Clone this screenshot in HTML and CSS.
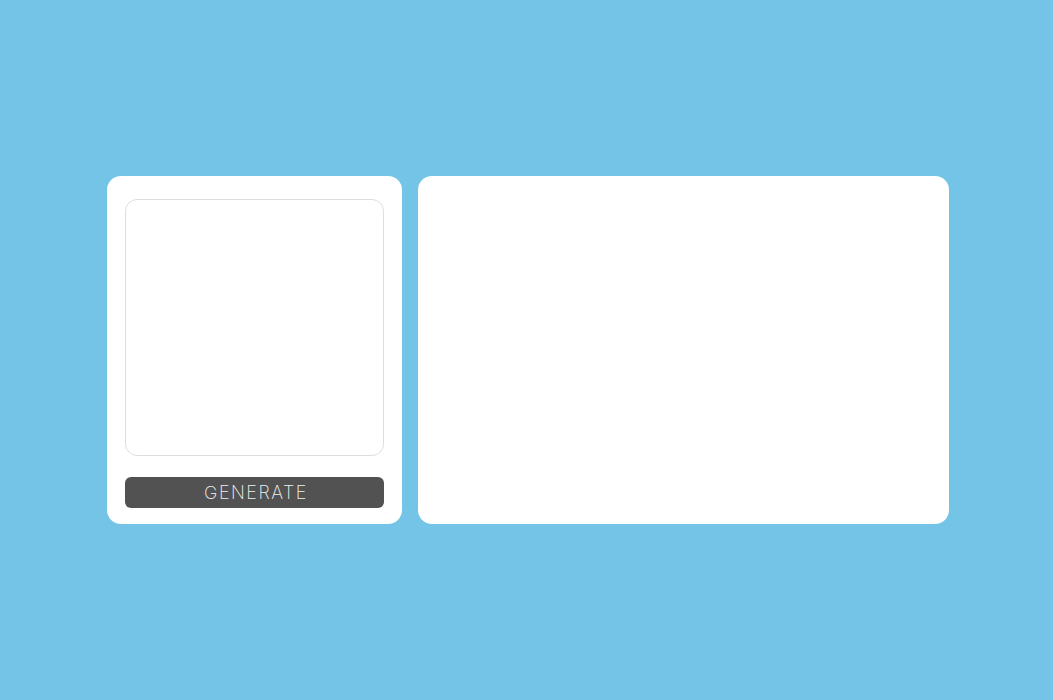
FILE: index.html
```html
<!DOCTYPE html>
<html>
<head>
<meta charset="utf-8">
<link rel="stylesheet" href="styles.css">
</head>
<body>
<main class="app">
  <section class="card input-card">
    <textarea class="prompt"></textarea>
    <button class="generate">GENERATE</button>
  </section>
  <section class="card output-card"></section>
</main>
</body>
</html>
```
FILE: styles.css
```css
html, body {
  margin: 0;
  height: 100%;
}
body {
  background: #73c4e6;
  font-family: Inter, "Noto Sans", sans-serif;
}
.app {
  height: 700px;
  display: flex;
  align-items: center;
  justify-content: center;
  gap: 16px;
  padding-left: 2px;
}
.card {
  background: #fff;
  border-radius: 14px;
  height: 348px;
  box-sizing: border-box;
}
.input-card {
  width: 295px;
  padding: 23px 18px 16px;
  display: flex;
  flex-direction: column;
}
.prompt {
  height: 257px;
  box-sizing: border-box;
  border: 1px solid #dedede;
  border-radius: 12px;
  resize: none;
  outline: none;
  margin: 0;
}
.generate {
  margin-top: 21px;
  height: 31px;
  border: none;
  border-radius: 6px;
  background: #525252;
  color: #f0f0f0;
  font-family: Inter, sans-serif;
  font-weight: 200;
  font-size: 18px;
  letter-spacing: 1.5px;
  padding: 0 0 0 4px;
}
.output-card {
  width: 531px;
}
```
